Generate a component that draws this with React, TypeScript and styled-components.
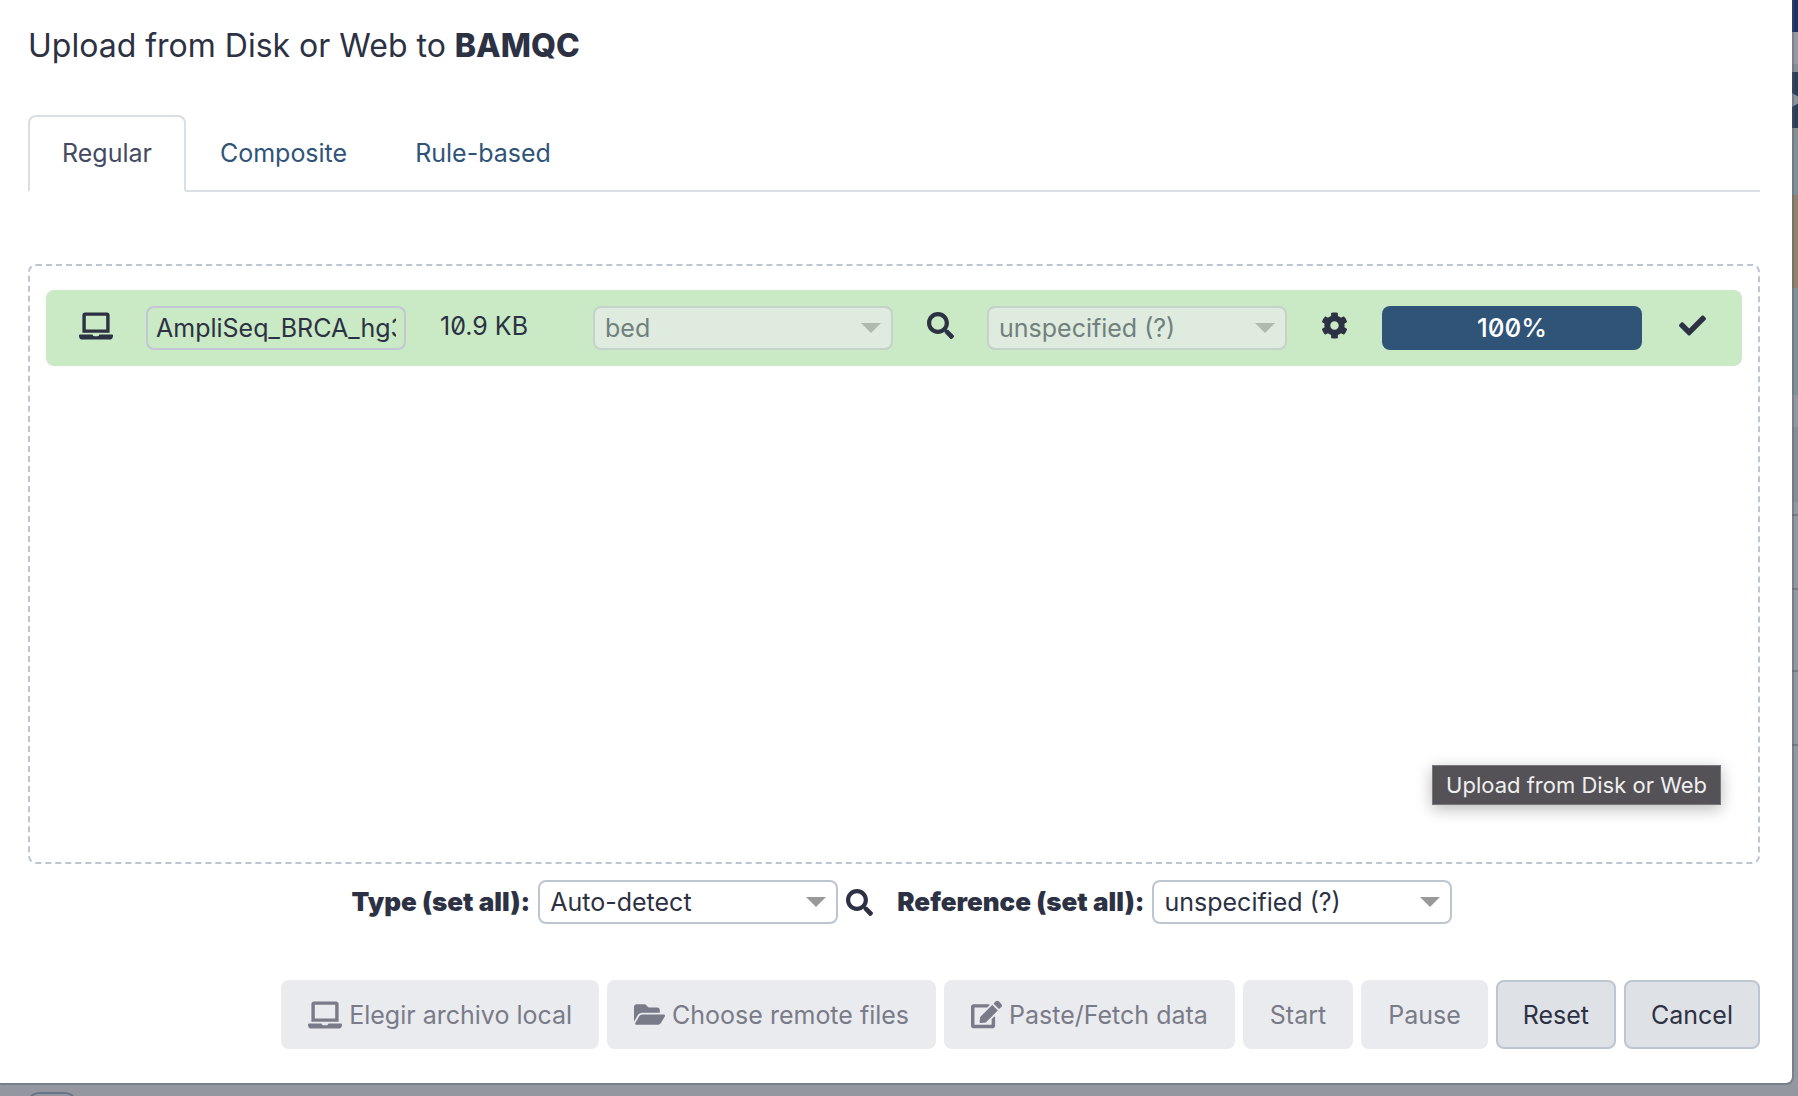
import React from "react";
import styled, { createGlobalStyle } from "styled-components";
import { FaLaptop, FaSearch, FaCog, FaCheck, FaFolderOpen, FaEdit } from "react-icons/fa";

const ink = "#2c3143";
const line = "#bdc6d0";
const brand = "#2f5478";

const GlobalStyle = createGlobalStyle`
  *, *::before, *::after { box-sizing: border-box; }
  body {
    margin: 0;
    background: #9496a0;
    color: ${ink};
    font-family: Inter, "Liberation Sans", sans-serif;
    font-size: 25px;
    line-height: 36px;
    font-feature-settings: "zero" 1;
  }
  button, input, select { font: inherit; color: inherit; font-feature-settings: inherit; }
`;

const Page = styled.div`
  position: relative;
  min-height: 100vh;
  overflow: hidden;
`;

const HistoryEdge = styled.div`
  position: absolute;
  inset: 0 0 0 auto;
  width: 6px;
  display: flex;
  flex-direction: column;
`;

const EdgeBlock = styled.div<{ $height: number; $color: string }>`
  flex: none;
  display: flex;
  align-items: center;
  height: ${(p) => p.$height}px;
  background: ${(p) => p.$color};
`;

const CollapseTab = styled.div`
  position: absolute;
  left: 27px;
  bottom: -28px;
  width: 50px;
  height: 32px;
  border: 2px solid #6b7484;
  border-radius: 12px;
`;

const Dialog = styled.section`
  position: relative;
  margin: 0 4px 11px -6px;
  padding: 24px 32px 34px;
  background: #fff;
  background-clip: padding-box;
  border: solid rgba(75, 90, 95, 0.35);
  border-width: 0 2px 2px;
  border-radius: 0 0 8px 8px;
`;

const Title = styled.h1`
  margin: 0;
  font-size: 32px;
  line-height: 44px;
  font-weight: 400;

  b { font-weight: 800; }
`;

const Tabs = styled.nav`
  display: flex;
  margin-top: 47px;
  border-bottom: 2px solid #dadfe4;
`;

const Tab = styled.a<{ $active?: boolean }>`
  margin-bottom: -2px;
  padding: 18px 32px 19px;
  border: 2px solid ${(p) => (p.$active ? "#dadfe4" : "transparent")};
  border-bottom-color: ${(p) => (p.$active ? "#fff" : "transparent")};
  border-radius: 8px 8px 0 0;
  color: ${(p) => (p.$active ? "#444a63" : brand)};
  text-decoration: none;
`;

const DropZone = styled.div`
  position: relative;
  min-height: 600px;
  margin-top: 72px;
  padding: 24px 16px;
  border: 2px dashed ${line};
  border-radius: 8px;
`;

const FileRow = styled.div`
  display: grid;
  grid-template-columns:
    100px minmax(0, 260fr) 187px minmax(0, 300fr) 94px
    minmax(0, 300fr) 95px minmax(0, 260fr) 100px;
  align-items: start;
  padding: 16px 0;
  border-radius: 8px;
  background: #c9eac5;
`;

const IconCell = styled.div`
  display: flex;
  align-items: center;
  justify-content: center;
  height: 39px;
`;

const IconButton = styled.button`
  display: flex;
  padding: 0;
  border: 0;
  background: none;
`;

const NameInput = styled.input`
  width: 100%;
  height: 44px;
  padding: 0 8px;
  border: 2px solid #c2c5d3;
  border-radius: 8px;
  background: transparent;
`;

const SizeCell = styled.div`
  height: 40px;
  padding-left: 34px;
  line-height: 40px;
`;

const SelectBox = styled.span<{ $width?: number; $disabled?: boolean }>`
  position: relative;
  display: block;
  width: ${(p) => (p.$width ? `${p.$width}px` : "100%")};

  &::after {
    content: "";
    position: absolute;
    top: 17px;
    right: 12px;
    border: solid transparent;
    border-width: 10px 10px 0;
    border-top-color: ${(p) => (p.$disabled ? "#aebaad" : "#999")};
    pointer-events: none;
  }
`;

const Select = styled.select`
  appearance: none;
  display: block;
  width: 100%;
  height: 44px;
  padding: 0 36px 0 10px;
  border: 2px solid ${line};
  border-radius: 8px;
  background: #fff;

  &:disabled {
    opacity: 1;
    color: #6f807d;
    border-color: #c4d2cb;
    background: #dfebde;
  }
`;

const Progress = styled.div`
  height: 44px;
  border-radius: 8px;
  background: ${brand};
  color: #fff;
  font-size: 26px;
  font-weight: 500;
  line-height: 44px;
  text-align: center;
`;

const Tooltip = styled.div`
  position: absolute;
  right: 37px;
  bottom: 57px;
  padding: 0 13px;
  border: 1px solid #77777a;
  background: #545257;
  box-shadow: 0 4px 16px rgba(0, 0, 0, 0.28);
  color: #efefef;
  font-size: 22px;
  line-height: 38px;
`;

const SetAll = styled.div`
  display: flex;
  align-items: center;
  justify-content: center;
  gap: 8px;
  margin-top: 16px;
  padding-left: 16px;
`;

const SetAllLabel = styled.label<{ $spaced?: boolean }>`
  margin-left: ${(p) => (p.$spaced ? 16 : 0)}px;
  font-size: 26px;
  font-weight: 900;
`;

const Actions = styled.div`
  display: flex;
  justify-content: flex-end;
  gap: 8px;
  margin-top: 56px;
`;

const Button = styled.button`
  display: flex;
  align-items: center;
  gap: 7px;
  height: 69px;
  padding: 0 25px;
  border: 2px solid ${line};
  border-radius: 8px;
  background: #dee1e6;
  white-space: nowrap;

  &:disabled {
    border-color: #eaebef;
    background: #eaebef;
    color: #797b88;
  }
`;

const edgeBlocks: [number, string][] = [
  [32, "#1f3168"],
  [32, "#9798a2"],
  [8, "#898c94"],
  [56, "#2c3e58"],
  [9, "#8a8c94"],
  [58, "#83909a"],
  [93, "#94806f"],
  [107, "#83909a"],
  [32, "#9496a0"],
  [75, "#878d98"],
  [12, "#9496a0"],
  [2, "#767c89"],
  [72, "#9496a0"],
  [2, "#767c89"],
  [80, "#9496a0"],
  [2, "#767c89"],
  [72, "#9496a0"],
  [2, "#767c89"],
];

export default function App() {
  return (
    <Page>
      <GlobalStyle />
      <HistoryEdge aria-hidden="true">
        {edgeBlocks.map(([height, color], i) => (
          <EdgeBlock key={i} $height={height} $color={color}>
            {height === 56 && (
              <svg width="6" height="14" viewBox="0 0 6 14">
                <path d="M0 0L6 3.5V10.5L0 14Z" fill="#8d929c" />
              </svg>
            )}
          </EdgeBlock>
        ))}
      </HistoryEdge>
      <CollapseTab />
      <Dialog role="dialog" aria-labelledby="upload-title">
        <Title id="upload-title">
          Upload from Disk or Web to <b>BAMQC</b>
        </Title>
        <Tabs>
          <Tab href="#regular" $active aria-current="page">Regular</Tab>
          <Tab href="#composite">Composite</Tab>
          <Tab href="#rule-based">Rule-based</Tab>
        </Tabs>
        <DropZone>
          <FileRow>
            <IconCell><FaLaptop size={34} /></IconCell>
            <NameInput aria-label="Name" defaultValue="AmpliSeq_BRCA_hg38.bed" />
            <SizeCell>10.9 KB</SizeCell>
            <SelectBox $disabled>
              <Select aria-label="Type" disabled><option>bed</option></Select>
            </SelectBox>
            <IconCell>
              <IconButton type="button" aria-label="Type details"><FaSearch size={27} /></IconButton>
            </IconCell>
            <SelectBox $disabled>
              <Select aria-label="Reference" disabled><option>unspecified (?)</option></Select>
            </SelectBox>
            <IconCell>
              <IconButton type="button" aria-label="Settings"><FaCog size={27} /></IconButton>
            </IconCell>
            <Progress role="progressbar" aria-valuenow={100}>100%</Progress>
            <IconCell><FaCheck size={27} /></IconCell>
          </FileRow>
          <Tooltip role="tooltip">Upload from Disk or Web</Tooltip>
        </DropZone>
        <SetAll>
          <SetAllLabel htmlFor="type-all">Type (set all):</SetAllLabel>
          <SelectBox $width={300}>
            <Select id="type-all"><option>Auto-detect</option></Select>
          </SelectBox>
          <IconButton type="button" aria-label="Type details"><FaSearch size={27} /></IconButton>
          <SetAllLabel htmlFor="reference-all" $spaced>Reference (set all):</SetAllLabel>
          <SelectBox $width={300}>
            <Select id="reference-all"><option>unspecified (?)</option></Select>
          </SelectBox>
        </SetAll>
        <Actions>
          <Button type="button" disabled><FaLaptop size={34} />Elegir archivo local</Button>
          <Button type="button" disabled><FaFolderOpen size={31} />Choose remote files</Button>
          <Button type="button" disabled><FaEdit size={31} />Paste/Fetch data</Button>
          <Button type="button" disabled>Start</Button>
          <Button type="button" disabled>Pause</Button>
          <Button type="button">Reset</Button>
          <Button type="button">Cancel</Button>
        </Actions>
      </Dialog>
    </Page>
  );
}
